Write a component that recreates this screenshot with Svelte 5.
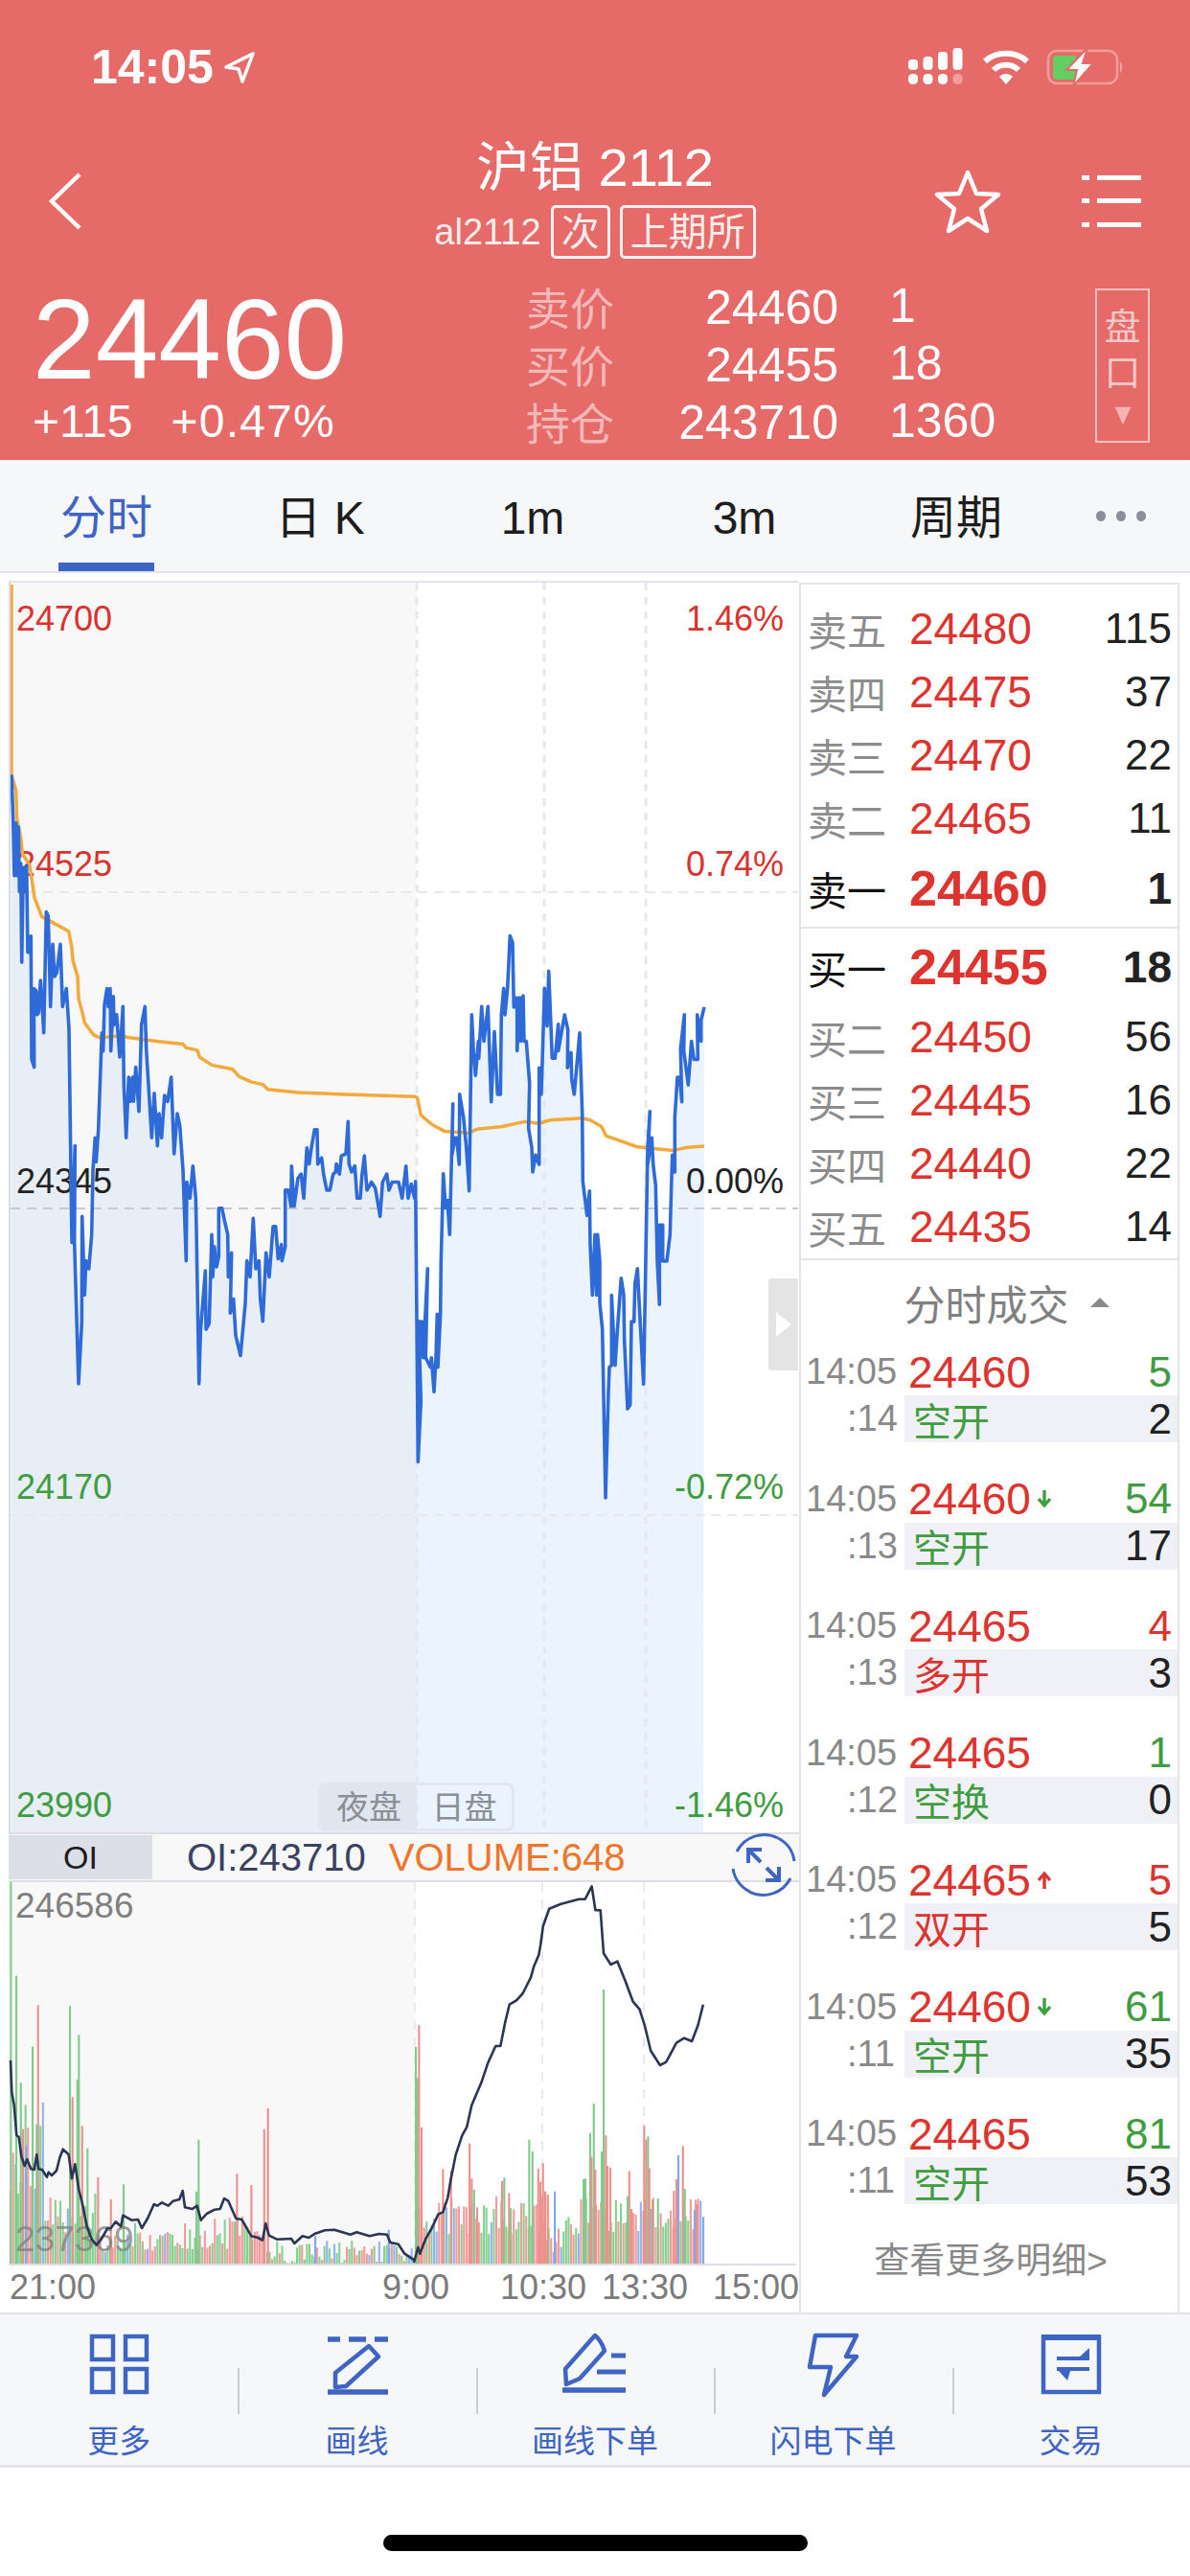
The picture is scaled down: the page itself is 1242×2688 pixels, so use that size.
<script>
  // traced chart data, in px of the 1242 wide page
  const night = [33,20,38,130,42,270,47,140,50,270,55,150,58,310,62,240,65,485,70,250,74,310,80,245,84,460,90,460,94,420,96,725,104,745,103,550,110,555,113,615,118,610,124,530,129,590,134,660,142,360,148,370,155,595,162,440,168,520,175,510,186,440,193,595,205,550,213,650,222,1180,232,940,230,1180,243,1530,253,1380,254,1115,262,1310,266,1225,275,1245,284,1160,288,1000,295,920,298,980,305,900,316,660,320,705,324,590,332,550,336,595,342,550,344,705,352,570,354,640,362,615,372,720,382,595,385,790,392,920,400,770,405,830,412,770,415,830,422,745,432,855,440,640,451,595,455,700,462,790,472,920,480,810,490,940,495,860,503,920,512,815,522,830,533,770,542,960,552,860,560,890,570,1000,580,1225,582,1030,592,1070,601,990,610,1070,612,1150,620,1530,625,1400,640,1250,642,1395,652,1380,660,1160,663,1265,668,1190,675,1240,682,1215,682,1095,692,1095,700,1125,710,1160,712,1265,722,1205,718,1355,728,1320,735,1410,750,1460,765,1330,770,1225,780,1265,790,1120,798,1245,808,1225,812,1320,820,1375,830,1205,840,1265,852,1140,860,1140,868,1220,878,1185,880,1225,890,1190,890,1050,900,1050,908,1090,910,990,918,1090,930,1020,940,1010,948,1070,958,945,965,985,972,945,982,900,990,900,992,985,1004,970,1010,1010,1020,1050,1030,1050,1040,1010,1048,1005,1050,985,1060,1010,1066,965,1080,960,1087,880,1090,985,1098,1005,1108,990,1115,1070,1125,1070,1130,1015,1138,965,1146,1050,1160,1030,1172,1045,1187,1115,1195,1030,1208,1010,1215,1050,1225,1030,1245,1030,1256,1070,1268,990,1275,1070,1285,1035,1295,1070,1298,1030];
  const day = [8,690,16,1430,25,1270,18,1060,28,1060,32,1155,46,920,40,1155,55,1180,58,1155,66,1245,72,1155,76,1040,78,1180,86,1040,88,900,95,670,102,760,108,740,115,830,125,485,122,620,132,575,137,575,145,645,146,460,158,520,167,600,176,715,184,250,190,350,196,410,205,320,206,365,215,228,222,320,235,228,245,480,255,295,265,460,274,460,277,250,284,180,288,250,296,180,304,42,312,60,316,230,326,205,326,345,335,205,338,320,345,200,348,320,355,320,365,430,362,550,372,600,375,665,384,620,395,645,395,390,402,460,412,180,420,280,425,135,432,280,436,365,445,365,455,275,455,345,475,250,485,290,484,390,495,350,497,420,505,460,522,298,530,510,532,690,545,780,553,715,555,855,562,990,570,830,575,990,578,830,585,900,585,1010,593,1080,603,1525,612,1245,615,1180,622,1175,622,990,633,1175,640,1085,652,945,660,990,662,1110,672,1290,680,1280,684,1060,692,1060,695,960,703,920,714,1100,722,1225,735,600,742,505,735,645,748,575,752,645,760,700,765,900,772,1015,772,805,782,805,782,900,795,900,805,830,808,740,812,620,820,665,820,520,828,415,835,415,842,480,838,340,850,250,848,345,862,435,872,320,880,368,892,368,890,250,902,320,902,265,912,230];
  const avgNight = [33,20,47,60,50,130,62,175,67,215,90,245,105,325,128,372,170,390,212,408,222,450,225,480,240,520,243,575,255,610,262,635,290,665,310,672,370,668,440,676,500,682,570,688,580,697,615,703,622,720,660,740,725,750,745,768,785,782,820,788,835,800,930,808,1100,813,1298,818];
  const avgDay = [14,470,25,515,60,540,100,558,175,562,200,552,280,545,350,532,395,537,430,528,530,523,555,528,590,545,605,570,640,580,700,598,760,604,815,608,860,600,912,597];
  const oiNight = [36,330,40,430,47,470,55,565,62,570,70,630,80,660,88,640,100,670,110,672,118,625,124,670,135,672,150,695,155,680,165,690,180,675,190,635,200,608,218,625,228,700,238,655,250,735,260,775,275,850,290,890,305,908,320,890,340,855,350,855,365,835,382,850,388,815,415,830,435,828,447,855,465,825,485,780,495,785,510,775,530,785,545,770,565,765,575,738,582,790,605,795,620,785,632,830,650,810,675,797,692,795,705,762,718,770,742,825,760,828,790,880,810,885,825,893,835,840,845,878,870,890,915,888,925,903,950,880,970,885,990,872,1020,862,1050,860,1100,875,1120,868,1160,880,1190,873,1215,875,1225,900,1250,905,1270,935,1300,955];
  const oiDay = [10,960,22,915,28,935,45,890,65,855,85,812,100,805,115,760,125,700,140,625,160,565,175,538,190,470,220,400,240,340,265,285,280,285,295,210,308,155,330,142,350,120,375,70,385,35,400,0];
  const oiPeak = [1055,240,1060,180,1072,125,1095,110,1130,95,1142,95,1155,55,1162,130,1172,130,1178,265,1192,300,1205,290,1220,350,1235,415,1248,440,1258,490,1270,570,1288,615,1300,605,1320,545,1335,530,1350,540,1362,490,1372,425];

  function trace(list, fx, fy) {
    const out = [];
    for (let i = 0; i < list.length; i += 2) {
      out.push(`${fx(list[i]).toFixed(1)},${fy(list[i + 1]).toFixed(1)}`);
    }
    return out.join(' ');
  }

  const nightX = (v) => v / 3;
  const dayX = (v) => 430 + v / 3;
  const priceLine = trace(night, nightX, (v) => 800 + v / 2.376) + ' ' + trace(day, dayX, (v) => 960 + v / 2.529);
  const priceArea = `${priceLine} 733,1912 11,1912`;
  const avgLine = '11,610 11,808 ' + trace(avgNight, nightX, (v) => 800 + v / 2.376) + ' ' + trace(avgDay, dayX, (v) => 960 + v / 2.529);
  const oiLine = trace(oiNight, nightX, (v) => 2040 + v / 3) + ' ' + trace(oiDay, dayX, (v) => 2040 + v / 3) + ' ' + trace(oiPeak, (v) => v / 1.867, (v) => 1950 + v / 3);

  // volume bars: seeded noise for the body, traced spikes on top
  let seed = 20211;
  function rnd() {
    seed = (seed * 1664525 + 1013904223) % 4294967296;
    return seed / 4294967296;
  }

  function envelope(x) {
    if (x < 45) return [70, 170];
    if (x < 100) return [25, 75];
    if (x < 215) return [12, 46];
    if (x < 280) return [12, 50];
    if (x < 433) return [0, 24];
    if (x < 570) return [28, 72];
    if (x < 590) return [10, 40];
    return [30, 70];
  }

  const barColors = ['#86d191', '#f09c9a', '#86d191', '#f09c9a', '#86d191', '#f09c9a', '#8fb4f0'];
  const bars = [];
  for (let x = 11; x < 733; x += 2.6) {
    const [lo, hi] = envelope(x);
    const h = lo + rnd() * (hi - lo);
    bars.push({ x: x.toFixed(1), y: (2362 - h).toFixed(1), h: h.toFixed(1), c: barColors[Math.floor(rnd() * 7)] });
  }

  const g = '#7fcb8b';
  const r = '#ee8f8c';
  const b = '#7fa8ee';
  const nightSpikes = [[37,-230,g],[54,65,g],[122,157,r],[105,287,g],[68,400,g],[75,545,r],[118,530,g],[222,160,g],[230,445,r],[250,250,g],[245,390,g],[260,535,r],[277,605,g],[310,695,r],[390,718,g],[350,765,r],[625,578,g],[618,740,g],[745,685,r],[790,720,r],[830,545,r],[842,480,r],[85,595,b],[1220,860,b],[990,880,b]];
  const daySpikes = [[15,288,g],[20,385,g],[25,220,r],[33,540,r],[100,670,r],[125,675,r],[183,590,r],[190,700,r],[197,735,g],[207,790,r],[285,708,r],[292,697,g],[307,745,r],[312,793,g],[370,578,g],[380,615,g],[398,668,r],[413,652,r],[405,710,r],[450,740,b],[420,740,r],[428,750,r],[540,702,g],[546,700,g],[561,557,g],[572,465,g],[565,632,r],[577,672,r],[603,108,g],[597,615,g],[610,565,r],[615,660,r],[624,665,r],[683,677,r],[678,755,g],[690,795,r],[730,535,r],[736,578,r],[742,568,g],[746,668,r],[756,765,r],[773,762,g],[823,738,r],[831,702,r],[837,627,b],[851,598,r],[857,732,g],[895,780,r],[888,798,b],[915,820,b]];

  for (const [x, y, c] of nightSpikes) {
    const top = 2040 + y / 3;
    bars.push({ x: (x / 3 - 1).toFixed(1), y: top.toFixed(1), h: (2362 - top).toFixed(1), c });
  }
  for (const [x, y, c] of daySpikes) {
    const top = 2040 + y / 3;
    bars.push({ x: (429 + x / 3).toFixed(1), y: top.toFixed(1), h: (2362 - top).toFixed(1), c });
  }

  const sells = [
    ['卖五', '24480', '115'],
    ['卖四', '24475', '37'],
    ['卖三', '24470', '22'],
    ['卖二', '24465', '11']
  ];
  const buys = [
    ['买二', '24450', '56'],
    ['买三', '24445', '16'],
    ['买四', '24440', '22'],
    ['买五', '24435', '14']
  ];

  const trades = [
    { sec: ':14', price: '24460', qty: '5', up: false, kind: '空开', change: '2' },
    { sec: ':13', price: '24460', arrow: 'down', qty: '54', up: false, kind: '空开', change: '17' },
    { sec: ':13', price: '24465', qty: '4', up: true, kind: '多开', change: '3' },
    { sec: ':12', price: '24465', qty: '1', up: false, kind: '空换', change: '0' },
    { sec: ':12', price: '24465', arrow: 'up', qty: '5', up: true, kind: '双开', change: '5' },
    { sec: ':11', price: '24460', arrow: 'down', qty: '61', up: false, kind: '空开', change: '35' },
    { sec: ':11', price: '24465', qty: '81', up: false, kind: '空开', change: '53' }
  ];

  const priceLabels = [
    { y: 658, left: '24700', right: '1.46%', color: '#d9332f' },
    { y: 914, left: '24525', right: '0.74%', color: '#d9332f' },
    { y: 1245, left: '24345', right: '0.00%', color: '#222222' },
    { y: 1564, left: '24170', right: '-0.72%', color: '#3f9d3f' },
    { y: 1896, left: '23990', right: '-1.46%', color: '#3f9d3f' }
  ];

  const axis = [
    { t: '21:00', x: 10, anchor: 'start' },
    { t: '9:00', x: 434, anchor: 'middle' },
    { t: '10:30', x: 567, anchor: 'middle' },
    { t: '13:30', x: 673, anchor: 'middle' },
    { t: '15:00', x: 834, anchor: 'end' }
  ];

  const tabs = ['分时', '日 K', '1m', '3m', '周期'];
</script>

<div class="page">
  <header class="head">
    <div class="status">
      <div class="clock">
        <span>14:05</span>
        <svg width="34" height="34" viewBox="0 0 34 34">
          <path d="M31 3 L3 17 L16 19 L20 32 Z" fill="none" stroke="#fff" stroke-width="3.5" stroke-linejoin="round" />
        </svg>
      </div>
      <div class="status-icons">
        <svg width="60" height="40" viewBox="0 0 60 40">
          <g fill="#fff">
            <rect x="0" y="12" width="10" height="11" rx="4" />
            <rect x="15.5" y="9" width="10" height="14" rx="4" />
            <rect x="31" y="4" width="10" height="19" rx="4" />
            <rect x="46.5" y="0" width="10" height="23" rx="4" />
            <rect x="0" y="27" width="10" height="11" rx="4.5" />
            <rect x="15.5" y="27" width="10" height="11" rx="4.5" />
            <rect x="31" y="27" width="10" height="11" rx="4.5" />
            <rect x="46.5" y="27" width="10" height="11" rx="4.5" opacity="0.35" />
          </g>
        </svg>
        <svg width="50" height="38" viewBox="0 0 50 38">
          <path d="M3 13 C15 2 35 2 47 13" fill="none" stroke="#fff" stroke-width="6" />
          <path d="M12 22 C19 15 31 15 38 22" fill="none" stroke="#fff" stroke-width="6" />
          <path d="M18 29 L25 37 L32 29 C28 25 22 25 18 29 Z" fill="#fff" />
        </svg>
        <svg width="82" height="42" viewBox="0 0 82 42">
          <rect x="2" y="4" width="72" height="34" rx="9" fill="none" stroke="#fff" stroke-opacity="0.35" stroke-width="2.5" />
          <rect x="7" y="9" width="25" height="25" rx="4" fill="#63cf63" />
          <path d="M77 15 C80 17 80 25 77 27 Z" fill="#fff" fill-opacity="0.4" />
          <path d="M43 1 L21 24 L32 24 L28 41 L49 17 L38 17 Z" fill="#fff" stroke="#e66a68" stroke-width="2" />
        </svg>
      </div>
    </div>

    <div class="nav">
      <svg class="back" width="40" height="64" viewBox="0 0 40 64">
        <path d="M33 4 L4 32 L33 60" fill="none" stroke="#fff" stroke-width="4.5" />
      </svg>
      <div class="title-block">
        <div class="title">沪铝 2112</div>
        <div class="subtitle">
          <span>al2112</span>
          <span class="tag">次</span>
          <span class="tag">上期所</span>
        </div>
      </div>
      <div class="nav-actions">
        <svg width="72" height="68" viewBox="0 0 72 68">
          <path d="M36 4 L45 26 L68 27 L50 42 L56 65 L36 52 L16 65 L22 42 L4 27 L27 26 Z" fill="none" stroke="#fff" stroke-width="4.5" stroke-linejoin="round" />
        </svg>
        <svg width="64" height="58" viewBox="0 0 64 58">
          <g fill="#fff">
            <rect x="1" y="2" width="8" height="5" />
            <rect x="17" y="2" width="46" height="5" />
            <rect x="1" y="26" width="8" height="5" />
            <rect x="17" y="26" width="46" height="5" />
            <rect x="1" y="51" width="8" height="5" />
            <rect x="17" y="51" width="46" height="5" />
          </g>
        </svg>
      </div>
    </div>

    <div class="quote">
      <div class="last">
        <div class="last-price">24460</div>
        <div class="last-change">
          <span>+115</span>
          <span class="last-pct">+0.47%</span>
        </div>
      </div>
      <div class="quote-table">
        <span class="q-label">卖价</span><span class="q-val">24460</span><span>1</span>
        <span class="q-label">买价</span><span class="q-val">24455</span><span>18</span>
        <span class="q-label">持仓</span><span class="q-val">243710</span><span>1360</span>
      </div>
      <div class="depth-toggle">
        <span>盘</span>
        <span>口</span>
        <svg width="20" height="20" viewBox="0 0 22 24"><path d="M1 1 H21 L11 23 Z" fill="#fff" fill-opacity="0.5" /></svg>
      </div>
    </div>
  </header>

  <nav class="tabs">
    {#each tabs as tab, i}
      <div class="tab" class:active={i === 0}>{tab}</div>
    {/each}
    <div class="tab more"><i></i><i></i><i></i></div>
  </nav>

  <main class="main">
    <section class="charts">
      <div class="price-chart">
        <svg class="plot" width="822" height="1304" viewBox="10 608 822 1304">
          <defs>
            <clipPath id="night-part"><rect x="10" y="608" width="424" height="1304" /></clipPath>
            <clipPath id="day-part"><rect x="434" y="608" width="400" height="1304" /></clipPath>
          </defs>
          <rect x="10" y="608" width="424" height="1304" fill="#f8f8f8" />
          <polygon points={priceArea} fill="#e7eef6" clip-path="url(#night-part)" />
          <polygon points={priceArea} fill="#ebf4fe" clip-path="url(#day-part)" />
          <g stroke="#e6e8ec" stroke-width="3" stroke-dasharray="8 7">
            <line x1="434" y1="608" x2="434" y2="1912" />
            <line x1="567" y1="608" x2="567" y2="1912" />
            <line x1="673" y1="608" x2="673" y2="1912" />
          </g>
          <g stroke="#e6e8ec" stroke-width="2" stroke-dasharray="10 7">
            <line x1="10" y1="931" x2="832" y2="931" />
            <line x1="10" y1="1581" x2="832" y2="1581" />
          </g>
          <line x1="10" y1="1261" x2="832" y2="1261" stroke="#c7cbd0" stroke-width="2" stroke-dasharray="10 7" />
          {#each priceLabels as row}
            <text class="chart-label" x="16" y={row.y} fill={row.color}>{row.left}</text>
            <text class="chart-label" x="817" y={row.y} fill={row.color} text-anchor="end">{row.right}</text>
          {/each}
          <polyline points={avgLine} fill="none" stroke="#f3a93b" stroke-width="3.5" stroke-linejoin="round" />
          <polyline points={priceLine} fill="none" stroke="#2f6bd8" stroke-width="3.6" stroke-linejoin="round" />
        </svg>
        <div class="handle">
          <svg width="18" height="30" viewBox="0 0 18 30"><path d="M1 2 L17 15 L1 28 Z" fill="#fff" /></svg>
        </div>
        <div class="session">
          <span class="session-night">夜盘</span>
          <span>日盘</span>
        </div>
      </div>

      <div class="indicator-bar">
        <span class="indicator-tab">OI</span>
        <span class="indicator-oi">OI:243710</span>
        <span class="indicator-vol">VOLUME:648</span>
        <svg class="expand" width="68" height="68" viewBox="0 0 68 68">
          <g fill="none" stroke="#3e64c4" stroke-width="3">
            <path d="M49 6 A32 32 0 0 0 6 20" />
            <path d="M2 38 A32 32 0 0 0 20 62" />
            <path d="M19 62 A32 32 0 0 0 62 48" />
            <path d="M66 30 A32 32 0 0 0 49 6" />
          </g>
          <g fill="none" stroke="#3e64c4" stroke-width="4">
            <path d="M18 32 V18 H32" />
            <path d="M19 19 L31 31" />
            <path d="M50 36 V50 H36" />
            <path d="M49 49 L37 37" />
          </g>
        </svg>
      </div>

      <div class="oi-chart">
        <svg class="plot" width="822" height="400" viewBox="10 1964 822 400">
          <rect x="10" y="1964" width="424" height="398" fill="#f8f8f8" />
          <g stroke="#e8eaee" stroke-width="2" stroke-dasharray="10 8">
            <line x1="434" y1="1964" x2="434" y2="2362" />
            <line x1="567" y1="1964" x2="567" y2="2362" />
            <line x1="673" y1="1964" x2="673" y2="2362" />
          </g>
          {#each bars as bar}
            <rect x={bar.x} y={bar.y} width="2.1" height={bar.h} fill={bar.c} />
          {/each}
          <text class="oi-label" x="17" y="2001">246586</text>
          <text class="oi-label faded" x="17" y="2349">237369</text>
          <polyline points={oiLine} fill="none" stroke="#2c3553" stroke-width="2.6" stroke-linejoin="round" />
          <rect x="10" y="2362" width="822" height="3" fill="#dcdee4" />
        </svg>
      </div>

      <svg class="axis" width="824" height="48" viewBox="10 2365 824 48">
        {#each axis as tick}
          <text class="axis-label" x={tick.x} y="2401" text-anchor={tick.anchor}>{tick.t}</text>
        {/each}
      </svg>
    </section>

    <aside class="book">
      <div class="levels">
        {#each sells as [name, price, size]}
          <div class="level"><span class="level-name">{name}</span><span class="level-price">{price}</span><span class="level-size">{size}</span></div>
        {/each}
        <div class="level best"><span class="level-name">卖一</span><span class="level-price">24460</span><span class="level-size">1</span></div>
      </div>
      <div class="levels-buy">
        <div class="level best"><span class="level-name">买一</span><span class="level-price">24455</span><span class="level-size">18</span></div>
        {#each buys as [name, price, size]}
          <div class="level"><span class="level-name">{name}</span><span class="level-price">{price}</span><span class="level-size">{size}</span></div>
        {/each}
      </div>

      <div class="ticks-title">
        <span>分时成交</span>
        <svg width="20" height="12" viewBox="0 0 20 12"><path d="M10 1 L20 11 H0 Z" fill="#8a8a8a" /></svg>
      </div>

      {#each trades as t}
        <div class="tick">
          <div class="tick-time">14:05</div>
          <div class="tick-top">
            <span class="tick-price">{t.price}</span>
            {#if t.arrow === 'down'}
              <svg width="16" height="20" viewBox="0 0 16 20"><path d="M8 1 V17 M2 10 L8 17 L14 10" fill="none" stroke="#3f9d3f" stroke-width="3.4" /></svg>
            {:else if t.arrow === 'up'}
              <svg width="16" height="20" viewBox="0 0 16 20"><path d="M8 19 V3 M2 10 L8 3 L14 10" fill="none" stroke="#dd342f" stroke-width="3.4" /></svg>
            {/if}
            <span class="tick-qty" class:up={t.up}>{t.qty}</span>
          </div>
          <div class="tick-sec">{t.sec}</div>
          <div class="tick-bottom">
            <span class="tick-kind" class:up={t.up}>{t.kind}</span>
            <span class="tick-change">{t.change}</span>
          </div>
        </div>
      {/each}

      <div class="ticks-more">查看更多明细&gt;</div>
    </aside>
  </main>

  <footer class="toolbar">
    <div class="tool">
      <svg width="80" height="72" viewBox="0 0 80 72">
        <g fill="none" stroke="#3e64c4" stroke-width="4.5">
          <rect x="12" y="6" width="22" height="24" />
          <rect x="47" y="6" width="22" height="24" />
          <rect x="12" y="40" width="22" height="24" />
          <rect x="47" y="40" width="22" height="24" />
        </g>
      </svg>
      <span>更多</span>
    </div>
    <div class="tool">
      <svg width="80" height="72" viewBox="0 0 80 72">
        <g fill="none" stroke="#3e64c4">
          <path d="M9 9 H22 M31 9 H49 M58 9 H72" stroke-width="5.5" />
          <path d="M52 16 L62 27 L28 58 L17 59 L17 44 Z" stroke-width="4.5" stroke-linejoin="round" />
          <path d="M9 64 H72" stroke-width="5.5" />
        </g>
      </svg>
      <span>画线</span>
    </div>
    <div class="tool">
      <svg width="80" height="72" viewBox="0 0 80 72">
        <g fill="none" stroke="#3e64c4">
          <path d="M40 5 C44 8 48 15 50 21 L24 50 L10 56 L9 40 Z" stroke-width="4.5" stroke-linejoin="round" />
          <path d="M57 26 H72 M42 43 H72" stroke-width="5" />
          <path d="M6 62 H72" stroke-width="5.5" />
        </g>
      </svg>
      <span>画线下单</span>
    </div>
    <div class="tool">
      <svg width="80" height="72" viewBox="0 0 80 72">
        <path d="M22 5 H65 L54 27 H65 L31 67 L38 38 H16 Z" fill="none" stroke="#3e64c4" stroke-width="4.5" stroke-linejoin="round" />
      </svg>
      <span>闪电下单</span>
    </div>
    <div class="tool">
      <svg width="80" height="72" viewBox="0 0 80 72">
        <path d="M11 7 H69 V64 H11 Z" fill="none" stroke="#3e64c4" stroke-width="4.5" />
        <path d="M9 7 H71" fill="none" stroke="#3e64c4" stroke-width="6" />
        <path d="M25 27 H49 L59 18 V31 H25 Z" fill="#3e64c4" />
        <path d="M25 38 H59 V42 H39 L36 52 L27 42 H25 Z" fill="#3e64c4" />
      </svg>
      <span>交易</span>
    </div>
  </footer>

  <div class="home-area"><div class="home-bar"></div></div>
</div>

<style>
  :global(body) {
    margin: 0;
    background: #fff;
  }

  .page {
    width: 1242px;
    height: 2688px;
    overflow: hidden;
    background: #fff;
    font-family: 'Liberation Sans', 'Noto Sans CJK SC', sans-serif;
    color: #222;
  }

  .head {
    height: 480px;
    background: #e66a68;
    color: #fff;
    display: flex;
    flex-direction: column;
  }

  .status {
    height: 140px;
    padding: 0 68px 0 95px;
    display: flex;
    align-items: center;
    justify-content: space-between;
    box-sizing: border-box;
  }

  .clock {
    display: flex;
    align-items: center;
    gap: 10px;
    font-size: 50px;
    font-weight: 700;
  }

  .status-icons {
    display: flex;
    align-items: center;
    gap: 17px;
  }

  .nav {
    height: 140px;
    padding: 0 50px 0 50px;
    display: grid;
    grid-template-columns: 1fr auto 1fr;
    align-items: center;
  }

  .title-block {
    display: flex;
    flex-direction: column;
    align-items: center;
    gap: 7px;
    margin-top: -8px;
  }

  .title {
    font-size: 56px;
    line-height: 64px;
  }

  .subtitle {
    display: flex;
    align-items: center;
    gap: 10px;
    font-size: 38px;
    line-height: 56px;
    color: rgba(255, 255, 255, 0.9);
  }

  .tag {
    box-sizing: border-box;
    height: 56px;
    padding: 0 8px;
    border: 3px solid rgba(255, 255, 255, 0.9);
    border-radius: 5px;
    line-height: 50px;
    font-size: 40px;
  }

  .nav-actions {
    justify-self: end;
    display: flex;
    align-items: center;
    gap: 82px;
  }

  .quote {
    flex: 1;
    padding: 9px 42px 0 38px;
    display: flex;
    align-items: flex-start;
  }

  .last {
    width: 511px;
  }

  .last-price {
    font-size: 118px;
    line-height: 104px;
    margin-left: -4px;
    margin-top: 13px;
  }

  .last-change {
    margin-top: 8px;
    margin-left: -4px;
    display: flex;
    gap: 40px;
    font-size: 48px;
    line-height: 52px;
  }

  .last-pct {
    letter-spacing: 1.2px;
  }

  .quote-table {
    display: grid;
    grid-template-columns: 92px 234px auto;
    grid-auto-rows: 60px;
    column-gap: 0;
    align-items: center;
    font-size: 50px;
    width: 594px;
  }

  .quote-table > span:nth-child(3n) {
    padding-left: 53px;
  }

  .q-label {
    font-size: 46px;
    color: rgba(255, 255, 255, 0.55);
  }

  .q-val {
    text-align: right;
    padding-top: 3px;
  }

  .depth-toggle {
    box-sizing: border-box;
    width: 57px;
    height: 161px;
    margin-top: 12px;
    border: 2px solid rgba(255, 255, 255, 0.6);
    display: flex;
    flex-direction: column;
    align-items: center;
    padding-top: 19px;
    gap: 10px;
    font-size: 38px;
    line-height: 38px;
    color: rgba(255, 255, 255, 0.65);
  }

  .depth-toggle svg {
    margin-top: 6px;
  }

  .tabs {
    box-sizing: border-box;
    height: 118px;
    background: #f6f7f9;
    border-bottom: 2px solid #e2e4e9;
    display: grid;
    grid-template-columns: 222px 224px 220px 222px 220px 1fr;
    align-items: center;
    font-size: 48px;
    color: #1d1d1d;
  }

  .tab {
    height: 116px;
    line-height: 122px;
    text-align: center;
    position: relative;
  }

  .tab.active {
    color: #3e64c4;
  }

  .tab.active::after {
    content: '';
    position: absolute;
    left: 61px;
    width: 100px;
    bottom: 0;
    height: 9px;
    background: #3e64c4;
  }

  .more {
    display: flex;
    align-items: center;
    justify-content: flex-start;
    gap: 11px;
    padding-left: 36px;
  }

  .more i {
    width: 10px;
    height: 11px;
    border-radius: 50%;
    background: #8a8f99;
  }

  .main {
    box-sizing: border-box;
    height: 1815px;
    padding: 10px 11px 0 10px;
    display: flex;
  }

  .charts {
    width: 824px;
    flex: none;
  }

  .plot {
    display: block;
  }

  .price-chart {
    position: relative;
    height: 1304px;
    border-left: 2px solid #d9dce3;
    margin-left: -1px;
    box-shadow: 0 -2px 0 #e2e4e9;
  }

  .chart-label {
    font-size: 36px;
  }

  .handle {
    position: absolute;
    left: 791px;
    top: 726px;
    width: 31px;
    height: 96px;
    background: #e4e4e4;
    border-radius: 3px 0 0 3px;
    display: flex;
    align-items: center;
    justify-content: center;
  }

  .session {
    position: absolute;
    left: 321px;
    top: 1252px;
    box-sizing: border-box;
    width: 205px;
    height: 51px;
    border: 3px solid #e1e6ef;
    border-radius: 8px;
    display: grid;
    grid-template-columns: 100px 1fr;
    font-size: 34px;
    line-height: 46px;
    text-align: center;
    color: #8a8f96;
    overflow: hidden;
  }

  .session-night {
    background: #dfe6f0;
  }

  .indicator-bar {
    position: relative;
    height: 50px;
    margin-left: -1px;
    border-top: 2px solid #dcdee4;
    box-sizing: border-box;
    background: #f8f8f8;
    display: flex;
    align-items: center;
    font-size: 40px;
  }

  .indicator-tab {
    width: 150px;
    height: 46px;
    margin-top: 0;
    line-height: 46px;
    text-align: center;
    background: #dcdfe8;
    font-size: 34px;
    color: #1c1c1c;
  }

  .indicator-oi {
    margin-left: 36px;
    color: #3a4260;
  }

  .indicator-vol {
    margin-left: 24px;
    color: #f0742a;
  }

  .expand {
    position: absolute;
    left: 754px;
    top: -2px;
  }

  .oi-chart {
    height: 401px;
    margin-left: -1px;
    border-top: 2px solid #dcdee4;
    box-sizing: border-box;
  }

  .oi-label {
    font-size: 37px;
    fill: #7f7f7f;
  }

  .oi-label.faded {
    fill-opacity: 0.75;
  }

  .axis {
    display: block;
  }

  .axis-label {
    font-size: 36px;
    fill: #7b7b7b;
  }

  .book {
    flex: 1;
    border-top: 2px solid #e2e4e9;
    border-left: 2px solid #e2e4e9;
    border-right: 2px solid #e2e4e9;
    box-sizing: border-box;
  }

  .levels {
    padding-top: 13px;
    border-bottom: 2px solid #e2e4e9;
  }

  .levels-buy {
    border-bottom: 2px solid #e2e4e9;
  }

  .level {
    height: 66px;
    display: flex;
    align-items: center;
    padding: 0 6px 0 7px;
  }

  .level-name {
    width: 106px;
    font-size: 41px;
    color: #8c8c8c;
  }

  .level-price {
    font-size: 46px;
    color: #dd342f;
  }

  .level-size {
    margin-left: auto;
    font-size: 44px;
    color: #222;
  }

  .level.best {
    height: 80px;
  }

  .best .level-name {
    color: #111;
  }

  .best .level-price {
    font-size: 52px;
    font-weight: 700;
  }

  .best .level-size {
    font-size: 46px;
    font-weight: 700;
  }

  .ticks-title {
    height: 92px;
    display: flex;
    align-items: center;
    justify-content: center;
    gap: 22px;
    padding: 0 0 4px 36px;
    box-sizing: border-box;
    font-size: 43px;
    color: #808080;
  }

  .tick {
    display: grid;
    grid-template-columns: 108px 1fr;
    grid-template-rows: 49px 49px;
    margin-bottom: 34.5px;
  }

  .tick-time {
    padding-left: 5px;
    font-size: 38px;
    line-height: 49px;
    color: #8a8a8a;
  }

  .tick-sec {
    padding-left: 48px;
    font-size: 38px;
    line-height: 49px;
    color: #8a8a8a;
  }

  .tick-top {
    display: flex;
    align-items: center;
    gap: 6px;
    padding: 0 6px 0 4px;
  }

  .tick-price {
    font-size: 46px;
    color: #dd342f;
  }

  .tick-qty {
    margin-left: auto;
    font-size: 44px;
    color: #3f9d3f;
  }

  .tick-qty.up,
  .tick-kind.up {
    color: #dd342f;
  }

  .tick-bottom {
    display: flex;
    align-items: center;
    padding: 0 6px 0 9px;
    background: #eff1f6;
  }

  .tick-kind {
    font-size: 40px;
    color: #3f9d3f;
  }

  .tick-change {
    margin-left: auto;
    font-size: 44px;
    color: #222;
  }

  .ticks-more {
    margin-top: 22px;
    text-align: center;
    padding-left: 3px;
    font-size: 37px;
    line-height: 50px;
    color: #888;
  }

  .toolbar {
    box-sizing: border-box;
    height: 162px;
    background: #f6f7f9;
    border-top: 2px solid #e2e4e9;
    border-bottom: 3px solid #e2e4e9;
    display: grid;
    grid-template-columns: repeat(5, 1fr);
  }

  .tool {
    position: relative;
    display: flex;
    flex-direction: column;
    align-items: center;
    padding-top: 17px;
    font-size: 33px;
    line-height: 40px;
    color: #3e64c4;
  }

  .tool svg {
    margin-bottom: 24px;
  }

  .tool + .tool::before {
    content: '';
    position: absolute;
    left: 0;
    top: 56px;
    height: 48px;
    width: 2px;
    background: #c9ccd2;
  }

  .home-area {
    padding-top: 70px;
    display: flex;
    justify-content: center;
  }

  .home-bar {
    width: 443px;
    height: 17px;
    border-radius: 9px;
    background: #000;
  }
</style>
